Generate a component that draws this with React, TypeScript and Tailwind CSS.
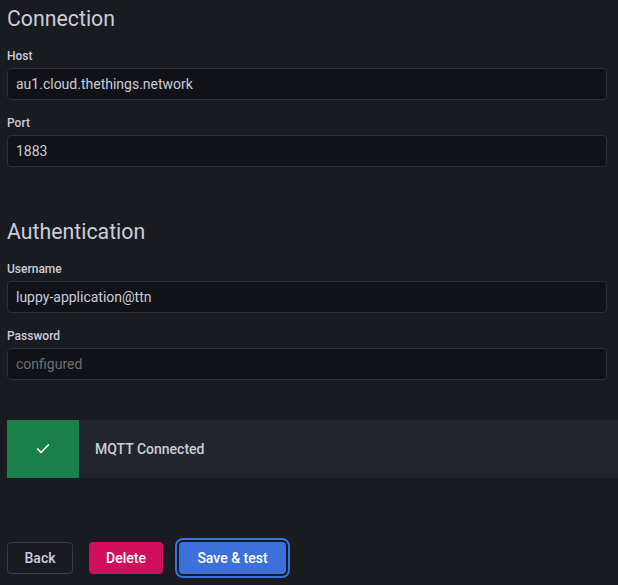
import { Check } from "lucide-react";

const Field = ({
  label,
  value,
  placeholder,
  className = "",
}: {
  label: string;
  value?: string;
  placeholder?: string;
  className?: string;
}) => (
  <div className={`flex flex-col ${className}`}>
    <label className="text-xs font-medium leading-[15px] text-[#ccccdc] mb-1">{label}</label>
    <div className="h-8 w-[600px] rounded-sm border border-[#2e3037] bg-[#111217] px-2 flex items-center text-sm">
      {value ? (
        <span className="text-[#ccccdc]">{value}</span>
      ) : (
        <span className="text-[#6e6f75]">{placeholder}</span>
      )}
    </div>
  </div>
);

export default function App() {
  return (
    <div
      className="min-h-[585px] w-[618px] overflow-hidden bg-[#181b1f] pl-[7px] pt-[6px] text-[#ccccdc]"
      style={{ fontFamily: "Roboto, 'Liberation Sans', sans-serif" }}
    >
      {/* Connection */}
      <h3 className="text-[21.3px] font-normal leading-[25px]">Connection</h3>
      <Field label="Host" value="au1.cloud.thethings.network" className="mt-[18px]" />
      <Field label="Port" value="1883" className="mt-4" />

      {/* Authentication */}
      <h3 className="mt-[52px] text-[21.3px] font-normal leading-[25px]">Authentication</h3>
      <Field label="Username" value="luppy-application@ttn" className="mt-[18px]" />
      <Field label="Password" placeholder="configured" className="mt-4" />

      {/* Status */}
      <div className="mt-10 flex h-[58px] bg-[#22252b]">
        <div className="flex w-[72px] items-center justify-center bg-[#1a7f4b]">
          <Check className="h-4 w-4 text-white" strokeWidth={2.5} />
        </div>
        <div className="flex items-center pl-4 text-sm font-medium text-[#ccccdc]">MQTT Connected</div>
      </div>

      {/* Actions */}
      <div className="mt-16 flex items-center gap-4">
        <button className="h-8 w-[66px] rounded-sm border border-[#3a3c43] text-sm font-medium text-[#ccccdc]">
          Back
        </button>
        <button className="h-8 w-[74px] rounded-sm bg-[#d10e5c] text-sm font-medium text-white">Delete</button>
        <button className="h-8 w-[107px] rounded-sm bg-[#3d71d9] text-sm font-medium text-white shadow-[0_0_0_2px_#181b1f,0_0_0_4px_#3d71d9]">
          Save &amp; test
        </button>
      </div>
    </div>
  );
}
